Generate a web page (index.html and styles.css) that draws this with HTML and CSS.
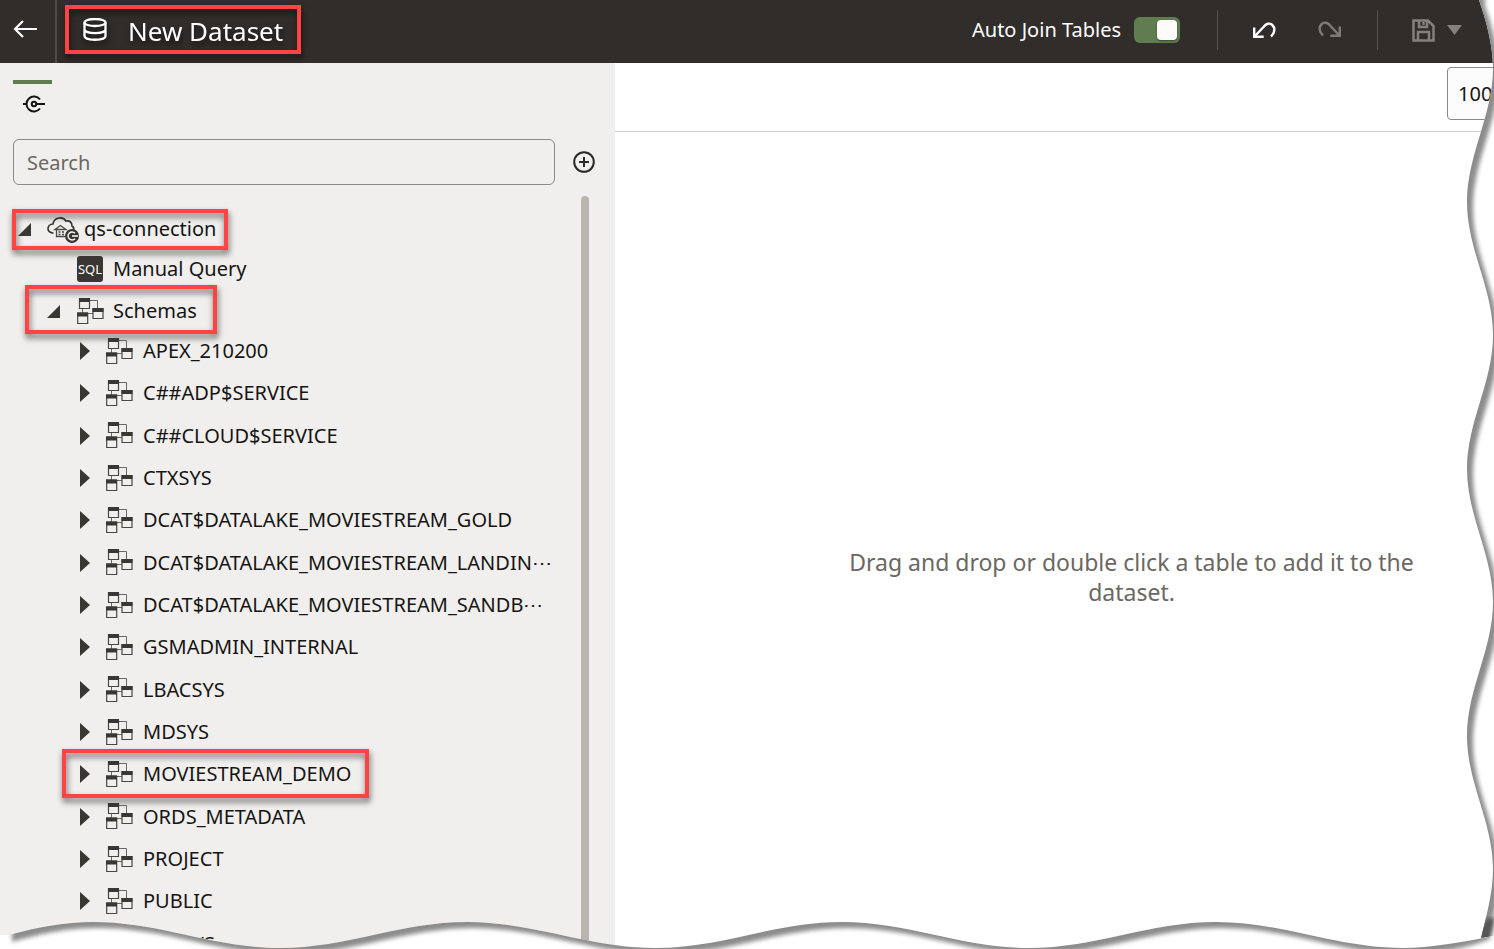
FILE: index.html
```html
<!DOCTYPE html>
<html lang="en">
<head>
<meta charset="utf-8">
<title>New Dataset</title>
<link rel="stylesheet" href="styles.css">
</head>
<body>
<svg class="defs" aria-hidden="true">
  <symbol id="i-schema" viewBox="0 0 27 27">
    <path d="M13 2.500h7.500v8M5.500 15v-4.500M11 15.500h5" fill="none" stroke="#6a6763"/>
    <path d="M2.500 1h10v9.500h-10zM16 10.500h10v10h-10zM.7 15h10v10.500h-10z" fill="#f0efed" stroke="#4a4743" stroke-width="1.200"/>
    <path d="M2 0h11v4H2zM15.500 10h11v4h-11zM0 14.500h11v4H0z" fill="#3a3631"/>
  </symbol>
  <symbol id="i-closed" viewBox="0 0 10 18"><path d="M0 0l10 9L0 18z" fill="#3a3631"/></symbol>
  <symbol id="i-open" viewBox="0 0 13 13"><path d="M13 0v13H0z" fill="#3a3631"/></symbol>
</svg>
<div class="app">
  <header class="topbar">
    <button class="back" aria-label="Back">
      <svg width="24" height="20" viewBox="0 0 24 20"><path d="M24 9H2M10 1L2 9l8 8" fill="none" stroke="#fff" stroke-width="2.200"/></svg>
    </button>
    <div class="title callout">
      <svg width="24" height="24" viewBox="0 0 24 24" fill="none" stroke="#fff" stroke-width="2.300"><ellipse cx="12" cy="4.500" rx="10.500" ry="3.500"/><path d="M1.500 4.500v13.500c0 5 21 5 21 0V4.500M1.500 11.500c0 4.700 21 4.700 21 0"/></svg>
      <h1>New Dataset</h1>
    </div>
    <div class="actions">
      <label class="toggle">Auto Join Tables <input type="checkbox" role="switch" checked></label>
      <span class="divider"></span>
      <button class="tool undo" aria-label="Undo">
        <svg width="24" height="18" viewBox="0 0 24 18" fill="none" stroke="#fff" stroke-width="2.400"><path d="M2.200 6.500v9.300h9.500M3 15L11.500 6C14 2.500 17.500 1.500 20.300 4C23.500 7 22.800 12 19 15.500"/></svg>
      </button>
      <button class="tool redo" aria-label="Redo" disabled>
        <svg width="24" height="18" viewBox="0 0 24 18" fill="none" stroke="#7d7a77" stroke-width="2.400"><path d="M21.800 5.500v9.300h-9.500M21 14L12.500 5C10 1.500 6.500 .5 3.700 3C.5 6 1.200 11 5 14.500"/></svg>
      </button>
      <span class="divider"></span>
      <button class="tool save" aria-label="Save" disabled>
        <svg width="23" height="23" viewBox="0 0 23 23" fill="none" stroke="#83807d" stroke-width="2.500"><path d="M1.500 1.500h14.500l5.500 5.500v14.500h-20zM7 2v6h8V2M11.500 3v3M6 21v-8h11v8"/></svg>
        <svg width="15" height="10" viewBox="0 0 15 10"><path d="M0 0h15L7.500 10z" fill="#83807d"/></svg>
      </button>
    </div>
  </header>
  <div class="body">
    <aside class="sidebar">
      <button class="tab" aria-label="Connections">
        <svg width="22" height="18" viewBox="0 0 22 18" fill="none" stroke="#161513" stroke-width="2"><path d="M17 4.500A7.500 7.500 0 1 0 17 13.500M0 9h4M13 9h9"/><circle cx="11" cy="9" r="2.200"/></svg>
      </button>
      <div class="search-row">
        <input class="search" type="search" placeholder="Search" aria-label="Search">
        <button class="add" aria-label="Add connection">
          <svg width="22" height="22" viewBox="0 0 22 22" fill="none" stroke="#2b2825" stroke-width="2"><circle cx="11" cy="11" r="9.800"/><path d="M11 6v10M6 11h10"/></svg>
        </button>
      </div>
      <div class="scroll">
        <ul class="tree">
          <li>
            <div class="row root"><span class="callout c-root"></span>
              <svg class="open" width="13" height="13"><use href="#i-open"/></svg>
              <svg class="cloud" width="33" height="28" viewBox="0 0 33 28">
                <path d="M6.500 18C-1 18-.5 9.500 6 9C7 2 16 1 19 6C22.500 5 25.500 8 25 11C27 12 27 13.500 26.500 15" fill="none" stroke="#3a3631" stroke-width="1.700"/>
                <path d="M8 14.500l5.500-4 5.500 4zM9.500 14v7.500h8.500" fill="none" stroke="#4a4743" stroke-width="1.300"/>
                <path d="M11.500 17h2M11.500 19.500h2M15 17h2M15 19.500h2" stroke="#4a4743" stroke-width="1.300"/>
                <circle cx="25" cy="21" r="7" fill="#3a3631"/>
                <path d="M28 18.300a4 4 0 1 0 0 5.400M25 21h6" fill="none" stroke="#fff" stroke-width="1.400"/>
              </svg>
              <span>qs-connection</span>
            </div>
            <ul>
              <li>
                <div class="row query">
                  <span class="sql">SQL</span>
                  <span>Manual Query</span>
                </div>
              </li>
              <li>
                <div class="row group"><span class="callout c-group"></span>
                  <svg class="open" width="13" height="13"><use href="#i-open"/></svg>
                  <svg width="27" height="27"><use href="#i-schema"/></svg>
                  <span>Schemas</span>
                </div>
                <ul class="schemas">
                  <li class="row"><svg width="10" height="18"><use href="#i-closed"/></svg><svg width="27" height="27"><use href="#i-schema"/></svg><span>APEX_210200</span></li>
                  <li class="row"><svg width="10" height="18"><use href="#i-closed"/></svg><svg width="27" height="27"><use href="#i-schema"/></svg><span>C##ADP$SERVICE</span></li>
                  <li class="row"><svg width="10" height="18"><use href="#i-closed"/></svg><svg width="27" height="27"><use href="#i-schema"/></svg><span>C##CLOUD$SERVICE</span></li>
                  <li class="row"><svg width="10" height="18"><use href="#i-closed"/></svg><svg width="27" height="27"><use href="#i-schema"/></svg><span>CTXSYS</span></li>
                  <li class="row"><svg width="10" height="18"><use href="#i-closed"/></svg><svg width="27" height="27"><use href="#i-schema"/></svg><span>DCAT$DATALAKE_MOVIESTREAM_GOLD</span></li>
                  <li class="row"><svg width="10" height="18"><use href="#i-closed"/></svg><svg width="27" height="27"><use href="#i-schema"/></svg><span>DCAT$DATALAKE_MOVIESTREAM_LANDIN⋯</span></li>
                  <li class="row"><svg width="10" height="18"><use href="#i-closed"/></svg><svg width="27" height="27"><use href="#i-schema"/></svg><span>DCAT$DATALAKE_MOVIESTREAM_SANDB⋯</span></li>
                  <li class="row"><svg width="10" height="18"><use href="#i-closed"/></svg><svg width="27" height="27"><use href="#i-schema"/></svg><span>GSMADMIN_INTERNAL</span></li>
                  <li class="row"><svg width="10" height="18"><use href="#i-closed"/></svg><svg width="27" height="27"><use href="#i-schema"/></svg><span>LBACSYS</span></li>
                  <li class="row"><svg width="10" height="18"><use href="#i-closed"/></svg><svg width="27" height="27"><use href="#i-schema"/></svg><span>MDSYS</span></li>
                  <li class="row"><span class="callout c-schema"></span><svg width="10" height="18"><use href="#i-closed"/></svg><svg width="27" height="27"><use href="#i-schema"/></svg><span>MOVIESTREAM_DEMO</span></li>
                  <li class="row"><svg width="10" height="18"><use href="#i-closed"/></svg><svg width="27" height="27"><use href="#i-schema"/></svg><span>ORDS_METADATA</span></li>
                  <li class="row"><svg width="10" height="18"><use href="#i-closed"/></svg><svg width="27" height="27"><use href="#i-schema"/></svg><span>PROJECT</span></li>
                  <li class="row"><svg width="10" height="18"><use href="#i-closed"/></svg><svg width="27" height="27"><use href="#i-schema"/></svg><span>PUBLIC</span></li>
                  <li class="row"><svg width="10" height="18"><use href="#i-closed"/></svg><svg width="27" height="27"><use href="#i-schema"/></svg><span>PYQSYS</span></li>
                </ul>
              </li>
            </ul>
          </li>
        </ul>
        <div class="thumb"></div>
      </div>
    </aside>
    <main class="main">
      <div class="canvas-bar"><input class="zoom" type="text" value="100%" aria-label="Zoom"></div>
      <div class="canvas"><p>Drag and drop or double click a table to add it to the dataset.</p></div>
    </main>
  </div>
  <svg class="torn" viewBox="0 0 1494 949" preserveAspectRatio="none" aria-hidden="true">
    <defs>
      <filter id="soft" x="-5%" y="-5%" width="110%" height="110%"><feGaussianBlur stdDeviation="2"/></filter>
      <path id="side" d="M1479 -20V0C1486 20 1493 45 1493 68C1493 115 1467 155 1467 202C1467 249 1493 288 1493 335C1493 382 1467 422 1467 469C1467 516 1493 555 1493 602C1493 649 1467 689 1467 736C1467 783 1493 822 1493 869C1493 893 1486 917 1481 938V980H-20V-20z"/>
      <clipPath id="below"><path d="M0 935H8C40 927 65 922 93 922C160 922 213 948 280 948C347 948 400 922 467 922C534 922 588 948 655 948C722 948 775 922 842 922C909 922 962 948 1029 948C1096 948 1149 922 1216 922C1283 922 1336 948 1403 948C1430 948 1462 942 1494 936V949H0z"/></clipPath>
      <clipPath id="beyond"><path d="M1479 0C1486 20 1493 45 1493 68C1493 115 1467 155 1467 202C1467 249 1493 288 1493 335C1493 382 1467 422 1467 469C1467 516 1493 555 1493 602C1493 649 1467 689 1467 736C1467 783 1493 822 1493 869C1493 893 1486 917 1481 938L1494 936V0z"/></clipPath>
    </defs>
    <g clip-path="url(#beyond)">
      <path d="M1460 0h34v949h-34z" fill="#fff"/>
      <use href="#side" x="6" y="6" fill="#8c8c8c" filter="url(#soft)"/>
      <path d="M1479 945V930L1487 918H1495L1489 945z" fill="#555" filter="url(#soft)"/>
    </g>
    <g clip-path="url(#below)">
      <path d="M0 915h1494v34H0z" fill="#fff"/>
      <path d="M12 942C40 934 65 928 99 928C166 928 219 954 286 954C353 954 406 928 473 928C540 928 594 954 661 954C728 954 781 928 848 928C915 928 968 954 1035 954C1102 954 1155 928 1222 928C1289 928 1342 954 1409 954C1436 954 1468 948 1490 939V900H12z" fill="#8c8c8c" filter="url(#soft)"/>
    </g>
  </svg>
</div>
</body>
</html>
```
FILE: styles.css
```css
* { box-sizing: border-box; }
body { margin: 0; font: 20px/30px "Noto Sans", "Open Sans", sans-serif; color: #161513; background: #fff; }
button { background: none; border: 0; padding: 0; font: inherit; color: inherit; }
ul { list-style: none; margin: 0; padding: 0; }
svg { flex: none; display: block; }
.defs { position: absolute; width: 0; height: 0; }
.app { position: relative; height: 100vh; overflow: hidden; display: flex; flex-direction: column; }

.topbar { flex: none; height: 63px; display: flex; align-items: center; background: #312d2a; color: #fff; padding-right: 32px; }
.back { align-self: stretch; width: 57px; padding: 0 5px 4px 0; border-right: 2px solid #4f4b48; display: flex; align-items: center; justify-content: center; }
.title { margin-left: 8px; width: 236px; height: 49px; margin-bottom: 4px; display: flex; align-items: center; gap: 21px; padding-left: 14px; }
.title h1 { margin: 0; font-size: 26px; line-height: 36px; font-weight: 400; padding-top: 2px; }
.callout { border: 4px solid #fc4444; filter: drop-shadow(1px 4px 3px rgba(0, 0, 0, .6)); }

.actions { margin-left: auto; display: flex; align-items: center; padding-bottom: 3px; }
.toggle { display: flex; align-items: center; gap: 13px; }
.toggle input { appearance: none; margin: 0; width: 46px; height: 26px; border-radius: 6px; background: #5f7d4f; padding: 3px; display: flex; justify-content: flex-end; }
.toggle input::before { content: ""; width: 20px; height: 20px; border-radius: 4px; background: #fcfbfa; box-shadow: 0 1px 2px rgba(0, 0, 0, .4); }
.divider { width: 1px; height: 40px; background: #55514e; }
.toggle + .divider { margin-left: 37px; }
.tool { display: flex; align-items: center; }
.undo { margin-left: 34px; }
.redo { margin-left: 42px; margin-right: 35px; }
.save { margin-left: 34px; gap: 12px; }

.body { flex: 1; min-height: 0; display: flex; }
.sidebar { flex: none; width: 615px; background: #f0efed; padding: 17px 0 0 13px; display: flex; flex-direction: column; }
.tab { width: 39px; height: 34px; border-top: 4px solid #5f7d4f; padding: 10px 0 0 10px; margin-bottom: 25px; }
.search-row { display: flex; align-items: center; gap: 18px; padding-right: 20px; }
.search { flex: 1; min-width: 0; height: 46px; border: 1px solid #8b8885; border-radius: 6px; background: none; padding: 0 13px; font: inherit; color: inherit; }
.search::placeholder { color: #6b6763; opacity: 1; }
.scroll { flex: 1; min-height: 0; display: flex; padding-right: 26px; margin-top: 11px; }
.thumb { flex: none; width: 8px; border-radius: 4px 4px 0 0; background: #bbb5b0; }
.tree { flex: 1; min-width: 0; padding-top: 13px; white-space: nowrap; }
.row { position: relative; display: flex; align-items: center; height: 40px; }
.root { padding-left: 5px; }
.root .open { margin-right: 16px; }
.cloud { margin-right: 4px; }
.query { padding-left: 64px; gap: 10px; margin-bottom: 3px; }
.sql { width: 26px; height: 26px; border-radius: 3px; background: #3a3631; color: #fff; font-size: 13px; line-height: 26px; text-align: center; }
.group { height: 38px; padding-left: 34px; gap: 9px; }
.group .open { margin-right: 8px; }
.schemas .row { height: 42px; padding-left: 67px; }
.schemas .row:nth-child(3n) { height: 43px; }
.schemas .row > svg { margin-right: 16px; }
.schemas .row > svg + svg { margin-right: 10px; }
.row .callout { position: absolute; }
.c-root { left: -1px; top: 0; width: 216px; height: 41px; }
.c-group { left: 12px; top: -7px; width: 192px; height: 49px; }
.c-schema { left: 49px; top: -4px; width: 307px; height: 49px; }

.main { flex: 1; min-width: 0; display: flex; flex-direction: column; overflow: hidden; }
.canvas-bar { flex: none; height: 69px; border-bottom: 1px solid #d0cfce; display: flex; justify-content: flex-end; padding-top: 4px; }
.zoom { flex: none; width: 100px; height: 53px; margin-right: -53px; border: 1px solid #8b8885; border-radius: 4px; background: #fcfcfc; padding: 0 10px; font: inherit; color: inherit; }
.canvas { flex: 1; display: flex; align-items: center; justify-content: center; padding: 72px 0 0 154px; }
.canvas p { margin: 0; max-width: 600px; font-size: 23px; text-align: center; color: #6b6763; }
.torn { position: absolute; inset: 0; width: 100%; height: 100%; pointer-events: none; }
```
